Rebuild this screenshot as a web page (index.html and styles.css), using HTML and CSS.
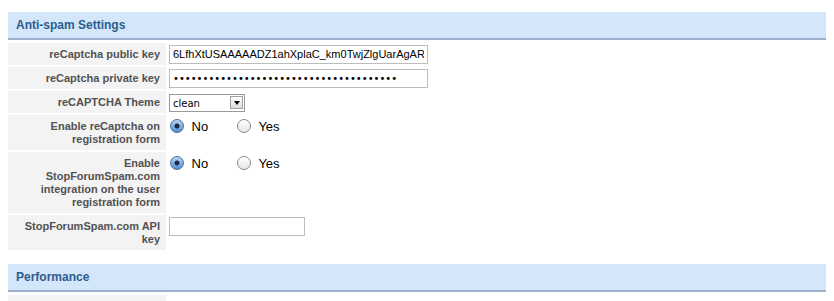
FILE: index.html
```html
<!DOCTYPE html>
<html lang="en">
<head>
    <meta charset="UTF-8">
    <title>Anti-spam Settings</title>
    <link rel="stylesheet" href="styles.css">
</head>
<body>

<div class="section">
    <h2 class="section-title">Anti-spam Settings</h2>
    <table class="settings">
        <tr>
            <td class="label">reCaptcha public key</td>
            <td class="value"><input type="text" class="text long" value="6LfhXtUSAAAAADZ1ahXplaC_km0TwjZlgUarAgAR"></td>
        </tr>
        <tr>
            <td class="label">reCaptcha private key</td>
            <td class="value"><input type="password" class="text long secret" value="abcdefghijabcdefghijabcdefghijabcdefgh"></td>
        </tr>
        <tr>
            <td class="label">reCAPTCHA Theme</td>
            <td class="value">
                <span class="select-wrap">
                    <select class="select">
                        <option>clean</option>
                        <option>red</option>
                        <option>white</option>
                        <option>blackglass</option>
                    </select>
                    <span class="select-arrow"></span>
                </span>
            </td>
        </tr>
        <tr>
            <td class="label">Enable reCaptcha on registration form</td>
            <td class="value">
                <div class="choices">
                    <label class="choice"><input type="radio" name="recaptcha" checked> No</label>
                    <label class="choice"><input type="radio" name="recaptcha"> Yes</label>
                </div>
            </td>
        </tr>
        <tr>
            <td class="label">Enable StopForumSpam.com integration on the user registration form</td>
            <td class="value">
                <div class="choices">
                    <label class="choice"><input type="radio" name="sfs" checked> No</label>
                    <label class="choice"><input type="radio" name="sfs"> Yes</label>
                </div>
            </td>
        </tr>
        <tr>
            <td class="label">StopForumSpam.com API key</td>
            <td class="value"><input type="text" class="text short" value=""></td>
        </tr>
    </table>
</div>

<div class="section">
    <h2 class="section-title">Performance</h2>
    <table class="settings">
        <tr>
            <td class="label">&nbsp;</td>
            <td class="value"></td>
        </tr>
    </table>
</div>

</body>
</html>
```

FILE: styles.css
```css
body {
    margin: 8px;
    padding-top: 4px;
    font-family: "Liberation Sans", Arial, sans-serif;
    background: #fff;
    color: #000;
}
.section {
    margin-bottom: 12px;
}
.section-title {
    margin: 0;
    height: 26px;
    line-height: 27px;
    padding: 0 8px;
    font-size: 12px;
    font-weight: bold;
    color: #2d5d8e;
    background-color: #d4e6fa;
    border-bottom: 2px solid #9ab0cb;
}
.settings {
    width: 100%;
    border-collapse: separate;
    border-spacing: 0 2px;
    margin-top: 1px;
}
.label {
    width: 148px;
    padding: 5px 6px 4px 4px;
    background-color: #f3f3f3;
    color: #525252;
    font-size: 11px;
    font-weight: bold;
    line-height: 13px;
    text-align: right;
    vertical-align: top;
}
.value {
    padding: 2px 3px 1px 3px;
    vertical-align: top;
    font-size: 13px;
}
.text {
    box-sizing: border-box;
    height: 19px;
    margin: 0;
    padding: 0 3px 1px 3px;
    border: 1px solid #bdbdbd;
    font-family: "Liberation Sans", Arial, sans-serif;
    font-size: 11px;
    line-height: 16px;
    color: #000;
    outline: none;
}
.secret {
    font-family: "DejaVu Sans", sans-serif;
    font-size: 10px;
}
.long {
    width: 259px;
}
.short {
    width: 136px;
}
.select-wrap {
    position: relative;
    display: inline-block;
    margin-top: 1px;
}
.select {
    -webkit-appearance: none;
    appearance: none;
    box-sizing: border-box;
    width: 76px;
    height: 18px;
    margin: 0;
    padding: 0 3px;
    border: 1px solid #9a9a9a;
    border-radius: 0;
    background: #fff;
    font-family: "DejaVu Sans", sans-serif;
    font-size: 10px;
    color: #000;
}
.select-arrow {
    position: absolute;
    top: 2px;
    right: 2px;
    width: 13px;
    height: 13px;
    box-sizing: border-box;
    border: 1px solid #a0a0a0;
    background: linear-gradient(#ffffff, #dcdcdc);
    pointer-events: none;
}
.select-arrow::after {
    content: "";
    position: absolute;
    left: 3px;
    top: 4px;
    border-left: 3px solid transparent;
    border-right: 3px solid transparent;
    border-top: 4px solid #000;
}
.choices {
    display: flex;
    margin-top: 1px;
}
.choice {
    width: 67px;
    line-height: 18px;
    color: #000;
}
.choice input {
    -webkit-appearance: none;
    appearance: none;
    width: 14px;
    height: 14px;
    margin: 0 4px 0 1px;
    vertical-align: -2px;
    border: 1px solid #8a8a8a;
    border-radius: 50%;
    background: linear-gradient(#ffffff, #e6e6e6);
    box-sizing: border-box;
}
.choice input:checked {
    border-color: #4a6f9c;
    background: radial-gradient(circle, #1c2c45 0, #1c2c45 2.2px, transparent 2.8px),
                linear-gradient(#b7d3f2, #4f8fd6);
}
```
